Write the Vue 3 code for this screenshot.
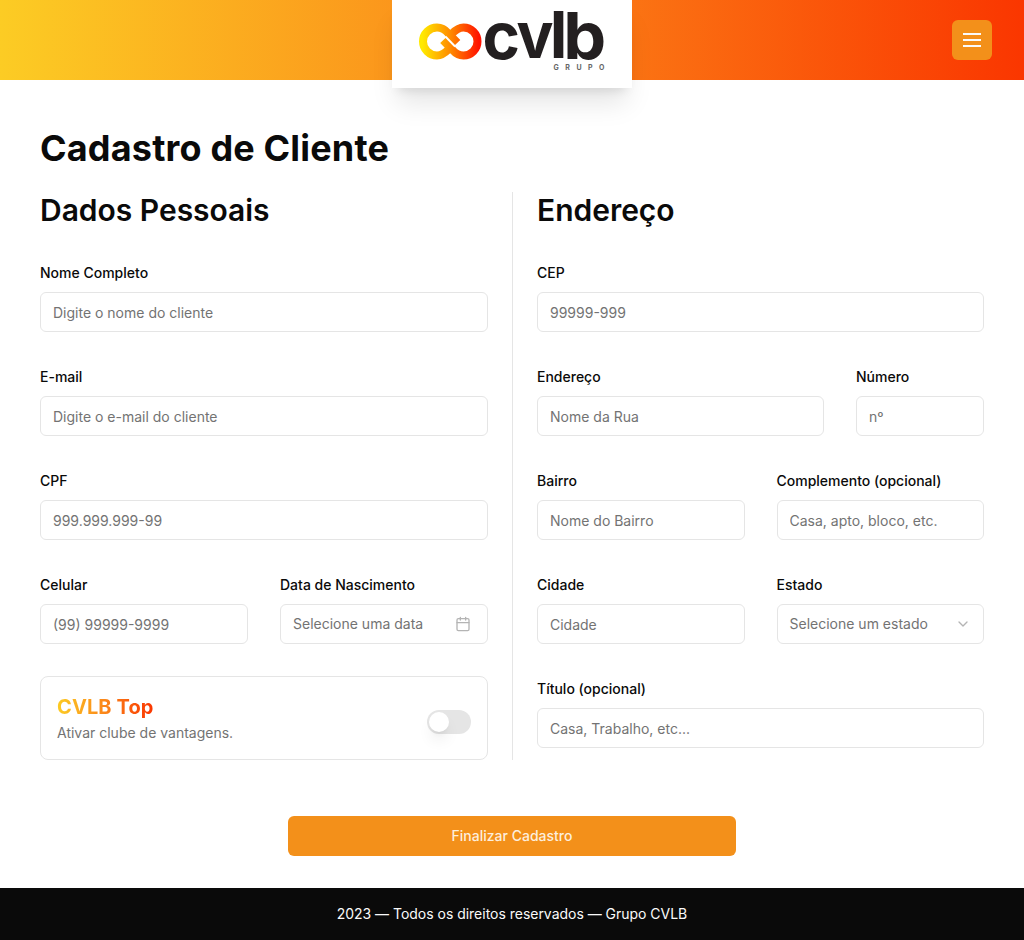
<script setup>
const states = ['Selecione um estado']
</script>

<template>
  <div class="page">
    <header class="header">
      <div class="brand">
        <svg class="logo" viewBox="0 0 240 88" role="img" aria-label="CVLB Grupo">
          <defs>
            <linearGradient id="loop" gradientUnits="userSpaceOnUse" x1="27" y1="0" x2="90" y2="0">
              <stop offset="0.05" stop-color="#ffea00" />
              <stop offset="0.5" stop-color="#ff8a00" />
              <stop offset="0.95" stop-color="#ff1200" />
            </linearGradient>
          </defs>
          <g fill="none" stroke="url(#loop)" stroke-width="8">
            <path d="M65.4 42.8 L56 33 C53 29.5 49.5 27.5 45 27.5 A14 14 0 0 0 45 55.5 C49.5 55.5 53 53 57 49" />
            <path d="M51.1 40.2 L60.5 50 C63.5 53.5 67 55.5 71.5 55.5 A14 14 0 0 0 71.5 27.5 C67 27.5 63.5 30 59.5 34" />
          </g>
          <path d="M53.4 36.5 L63.1 46.5" stroke="#fff" stroke-width="1.9" />
          <g class="wordmark">
            <text x="90.5" y="58.6" textLength="37.5" lengthAdjust="spacingAndGlyphs">c</text>
            <text x="124.5" y="58.2" textLength="37" lengthAdjust="spacingAndGlyphs">v</text>
            <text x="157.8" y="58.2">l</text>
            <text x="171.2" y="58.6" textLength="43" lengthAdjust="spacingAndGlyphs">b</text>
          </g>
          <text class="group" x="161.5" y="69.8" textLength="51">GRUPO</text>
        </svg>
      </div>
      <button class="menu" aria-label="Menu">
        <svg width="24" height="24" viewBox="0 0 24 24"><path d="M3 6h18M3 12h18M3 18h18" stroke="#fafafa" stroke-width="2" /></svg>
      </button>
    </header>

    <main>
      <h1>Cadastro de Cliente</h1>
      <form @submit.prevent>
        <div class="columns">
          <section class="left">
            <h2>Dados Pessoais</h2>
            <label>Nome Completo<input placeholder="Digite o nome do cliente" /></label>
            <label>E-mail<input placeholder="Digite o e-mail do cliente" /></label>
            <label>CPF<input placeholder="999.999.999-99" /></label>
            <div class="row">
              <label>Celular<input placeholder="(99) 99999-9999" /></label>
              <label>Data de Nascimento
                <span class="picker">Selecione uma data
                  <svg width="16" height="16" viewBox="0 0 24 24"><rect x="3" y="4" width="18" height="18" rx="2" /><path d="M16 2v4M8 2v4M3 10h18" /></svg>
                </span>
              </label>
            </div>
            <div class="club">
              <div>
                <strong>CVLB Top</strong>
                <p>Ativar clube de vantagens.</p>
              </div>
              <span class="switch" role="switch" aria-checked="false"><i /></span>
            </div>
          </section>
          <section class="right">
            <h2>Endereço</h2>
            <label>CEP<input placeholder="99999-999" /></label>
            <div class="row street">
              <label>Endereço<input placeholder="Nome da Rua" /></label>
              <label>Número<input placeholder="nº" /></label>
            </div>
            <div class="row">
              <label>Bairro<input placeholder="Nome do Bairro" /></label>
              <label>Complemento (opcional)<input placeholder="Casa, apto, bloco, etc." /></label>
            </div>
            <div class="row">
              <label>Cidade<input placeholder="Cidade" /></label>
              <label>Estado
                <span class="picker select">{{ states[0] }}
                  <svg width="16" height="16" viewBox="0 0 24 24"><path d="m6 9 6 6 6-6" /></svg>
                </span>
              </label>
            </div>
            <label>Título (opcional)<input placeholder="Casa, Trabalho, etc..." /></label>
          </section>
        </div>
        <button class="submit">Finalizar Cadastro</button>
      </form>
    </main>
    <footer>2023 — Todos os direitos reservados — Grupo CVLB</footer>
  </div>
</template>

<style>
body { margin: 0; background: #fff; }
</style>

<style scoped>
* { box-sizing: border-box; }
.page {
  width: 100%;
  height: 940px;
  display: flex;
  flex-direction: column;
  font: 400 14px/20px Inter, sans-serif;
  color: #0a0a0a;
}
.header {
  height: 80px;
  flex: none;
  padding: 0 32px;
  display: grid;
  grid-template-columns: 1fr 240px 1fr;
  grid-template-rows: 80px;
  align-items: center;
  background: linear-gradient(90deg, #fccc24, #fb8619 50%, #fa3600);
}
.brand {
  grid-column: 2;
  align-self: start;
  height: 88px;
  background: #fff;
  box-shadow: 0 20px 25px -5px rgb(0 0 0 / 0.1), 0 8px 10px -6px rgb(0 0 0 / 0.1);
}
.logo { display: block; width: 240px; height: 88px; overflow: visible; }
.wordmark { font: 700 65px Inter, sans-serif; fill: #231f20; }
.group { font: 700 7px Inter, sans-serif; fill: #666; }
button { border: 0; border-radius: 6px; background: #f3901a; font-family: inherit; }
.menu {
  justify-self: end;
  width: 40px;
  height: 40px;
  padding: 8px;
}
.menu svg { display: block; }
main { flex: 1; padding: 48px 40px 0; }
h1 { margin: 0 0 24px; font-size: 36px; line-height: 40px; font-weight: 700; letter-spacing: 0.17px; height: 40px; }
h1, h2 { white-space: nowrap; }
h2 { margin: 0; font-size: 30px; line-height: 36px; font-weight: 600; letter-spacing: -0.02px; }
.columns { display: grid; grid-template-columns: 1fr 1fr; height: 568px; }
section { display: flex; flex-direction: column; gap: 32px; }
.left { padding-right: 24px; }
.right { padding-left: 24px; border-left: 1px solid #e5e5e5; }
label { display: flex; flex-direction: column; gap: 9px; height: 72px; padding-top: 3px; font-weight: 500; min-width: 0; }
input, .picker {
  width: 100%;
  height: 40px;
  padding: 8px 12px;
  border: 1px solid #e5e5e5;
  border-radius: 6px;
  background: #fff;
  font: 400 14px/20px Inter, sans-serif;
}
input { display: block; outline: 0; }
input::placeholder { color: #737373; opacity: 1; }
.picker { display: flex; align-items: center; justify-content: space-between; color: #737373; }
.picker svg { margin-right: 4px; fill: none; stroke: #0a0a0a; stroke-width: 2; stroke-linecap: round; stroke-linejoin: round; opacity: 0.3; }
.picker.select svg { margin-right: 0; }
.row { display: grid; grid-template-columns: 1fr 1fr; gap: 32px; }
.street { grid-template-columns: 287px 1fr; }
.club {
  height: 84px;
  padding: 16px;
  display: flex;
  align-items: center;
  justify-content: space-between;
  border: 1px solid #e5e5e5;
  border-radius: 8px;
}
.club strong {
  display: block;
  width: fit-content;
  font-size: 20px;
  line-height: 28px;
  font-weight: 700;
  letter-spacing: 0.1px;
  color: transparent;
  background: linear-gradient(90deg, #fccc24, #fb8619 50%, #fa3600);
  background-clip: text;
}
.club p { margin: 2px 0 0; color: #737373; }
.switch { width: 44px; height: 24px; padding: 2px; margin-top: 8px; border-radius: 12px; background: #e5e5e5; }
.switch i { display: block; width: 20px; height: 20px; border-radius: 50%; background: #fff; box-shadow: 0 10px 15px -3px rgb(0 0 0 / 0.1), 0 4px 6px -4px rgb(0 0 0 / 0.1); }
.submit { display: block; width: 448px; height: 40px; margin: 56px auto 0; padding: 0; color: #fdeedd; font-size: 14px; line-height: 20px; font-weight: 500; }
footer { height: 52px; flex: none; display: flex; align-items: center; justify-content: center; background: #0a0a0a; color: #fafafa; letter-spacing: -0.02px; }
</style>
